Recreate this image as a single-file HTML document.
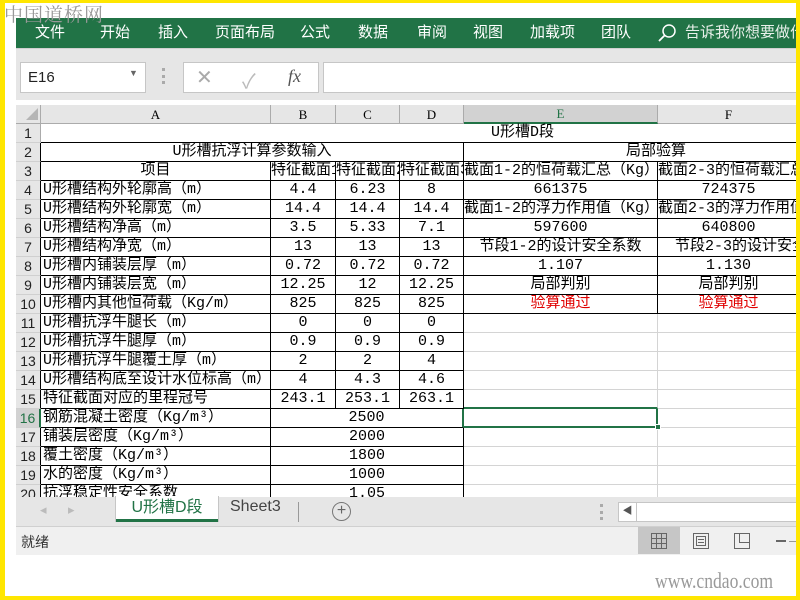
<!DOCTYPE html>
<html><head><meta charset="utf-8"><style>
*{box-sizing:border-box}
body{margin:0;width:800px;height:600px;background:#fff;position:relative;overflow:hidden;font-family:"Liberation Sans","Noto Sans CJK SC",sans-serif}
.abs{position:absolute}
#frame{position:absolute;left:0;top:0;width:800px;height:600px;border:solid #ffe600;border-width:3px 4px 4px 5px;pointer-events:none;z-index:20}
#ribbon{left:16px;top:18px;width:784px;height:30px;background:#217346;color:#fff;font-size:15px}
#ribbon span{position:absolute;top:3px;white-space:nowrap}
#fbar{left:16px;top:48px;width:784px;height:52px;background:#e6e6e6;border-top:1px solid #d0d0d0}
.box{position:absolute;background:#fff;border:1px solid #c6c6c6}
#grid{position:absolute;left:16px;top:105px;width:784px;border-collapse:separate;border-spacing:0;table-layout:fixed;font-family:"Liberation Mono","Noto Sans CJK SC",monospace;font-size:15px;color:#000}
#grid td{padding:0;height:19px;line-height:18px;white-space:nowrap;overflow:hidden;border-right:1px solid #d4d4d4;border-bottom:1px solid #d4d4d4;text-align:center}
#grid tr.h td{height:17px;background:#e6e6e6;border-right:1px solid #ababab;border-bottom:1px solid #ababab;font-family:"Liberation Serif",serif;font-size:13px;line-height:17px}
#grid td.r{background:#e6e6e6;border-right:1px solid #ababab;border-bottom:1px solid #d0d0d0;font-family:"Liberation Sans",sans-serif;font-size:14px;color:#222}
#grid td.r.k{border-right-color:#000}
#grid td.b{border-right-color:#000;border-bottom-color:#000}
#grid td.l{text-align:left;padding-left:2px}
.red{color:#e00000}
#tabs{left:16px;top:497px;width:784px;height:30px;background:#e6e6e6;border-bottom:1px solid #d0d0d0}
#status{left:16px;top:527px;width:784px;height:28px;background:#f0f0f0;font-size:14px;color:#333}
</style></head><body>
<div class="abs" style="left:4px;top:0;font-family:'Noto Serif CJK SC',serif;font-size:19px;color:#999;letter-spacing:1px;z-index:10">中国道桥网</div>
<div id="ribbon" class="abs">
<span style="left:19px">文件</span><span style="left:84px">开始</span><span style="left:142px">插入</span><span style="left:199px">页面布局</span><span style="left:284px">公式</span><span style="left:342px">数据</span><span style="left:401px">审阅</span><span style="left:457px">视图</span><span style="left:514px">加载项</span><span style="left:585px">团队</span>
<svg style="position:absolute;left:641px;top:5px" width="20" height="20"><circle cx="12" cy="8" r="6" fill="none" stroke="#fff" stroke-width="1.5"/><line x1="8" y1="12" x2="2" y2="18" stroke="#fff" stroke-width="1.8"/></svg>
<span style="left:669px;color:#e8f0ea">告诉我你想要做什</span>
</div>
<div id="fbar" class="abs"></div>
<div class="box" style="left:20px;top:62px;width:126px;height:31px;font-size:15px;padding:6px 0 0 7px;color:#222">E16<span style="position:absolute;left:108px;top:5px;font-size:9px;color:#666">▼</span></div>
<div class="abs" style="left:162px;top:68px;width:3px;height:16px;border-left:3px dotted #aaa"></div>
<div class="box" style="left:183px;top:62px;width:136px;height:31px">
<span style="position:absolute;left:12px;top:2px;font-size:20px;color:#aaa">✕</span>
<span style="position:absolute;left:58px;top:2px;font-size:20px;color:#bbb">✓</span>
<span style="position:absolute;left:104px;top:3px;font-size:18px;font-style:italic;font-family:'Liberation Serif',serif;color:#555">fx</span></div>
<div class="box" style="left:323px;top:62px;width:477px;height:31px"></div>
<table id="grid">
<colgroup><col style="width:25px"><col style="width:230px"><col style="width:65px"><col style="width:64px"><col style="width:64px"><col style="width:194px"><col style="width:142px"></colgroup>
<tr class="h"><td style="position:relative"><svg style="position:absolute;left:9px;top:2px" width="14" height="14"><polygon points="13,1 13,13 1,13" fill="#b5b5b5"/></svg></td><td>A</td><td>B</td><td>C</td><td>D</td><td style="background:#d2d2d2;color:#217346;border-bottom:2px solid #217346">E</td><td>F</td></tr>
<tr><td class="r">1</td><td colspan="6" style="border-right:0;border-bottom-color:#000;text-align:left;padding-left:450px;overflow:visible">U形槽D段</td></tr>
<tr><td class="r k">2</td><td colspan="4" class="b">U形槽抗浮计算参数输入</td><td colspan="2" class="b" style="text-align:left;padding-left:162px">局部验算</td></tr>
<tr><td class="r k">3</td><td class="b">项目</td><td class="b l" style="padding:0">特征截面1</td><td class="b l" style="padding:0">特征截面2</td><td class="b l" style="padding:0">特征截面3</td><td class="b l" style="padding:0">截面1-2的恒荷载汇总（Kg）</td><td class="b l" style="padding:0">截面2-3的恒荷载汇总</td></tr>
<tr><td class="r k">4</td><td class="b l">U形槽结构外轮廓高（m）</td><td class="b">4.4</td><td class="b">6.23</td><td class="b">8</td><td class="b">661375</td><td class="b">724375</td></tr>
<tr><td class="r k">5</td><td class="b l">U形槽结构外轮廓宽（m）</td><td class="b">14.4</td><td class="b">14.4</td><td class="b">14.4</td><td class="b l" style="padding:0">截面1-2的浮力作用值（Kg）</td><td class="b l" style="padding:0">截面2-3的浮力作用值</td></tr>
<tr><td class="r k">6</td><td class="b l">U形槽结构净高（m）</td><td class="b">3.5</td><td class="b">5.33</td><td class="b">7.1</td><td class="b">597600</td><td class="b">640800</td></tr>
<tr><td class="r k">7</td><td class="b l">U形槽结构净宽（m）</td><td class="b">13</td><td class="b">13</td><td class="b">13</td><td class="b">节段1-2的设计安全系数</td><td class="b l" style="padding-left:17px">节段2-3的设计安全系数</td></tr>
<tr><td class="r k">8</td><td class="b l">U形槽内铺装层厚（m）</td><td class="b">0.72</td><td class="b">0.72</td><td class="b">0.72</td><td class="b">1.107</td><td class="b">1.130</td></tr>
<tr><td class="r k">9</td><td class="b l">U形槽内铺装层宽（m）</td><td class="b">12.25</td><td class="b">12</td><td class="b">12.25</td><td class="b">局部判别</td><td class="b">局部判别</td></tr>
<tr><td class="r k">10</td><td class="b l">U形槽内其他恒荷载（Kg/m）</td><td class="b">825</td><td class="b">825</td><td class="b">825</td><td class="b red">验算通过</td><td class="b red">验算通过</td></tr>
<tr><td class="r k">11</td><td class="b l">U形槽抗浮牛腿长（m）</td><td class="b">0</td><td class="b">0</td><td class="b">0</td><td></td><td></td></tr>
<tr><td class="r k">12</td><td class="b l">U形槽抗浮牛腿厚（m）</td><td class="b">0.9</td><td class="b">0.9</td><td class="b">0.9</td><td></td><td></td></tr>
<tr><td class="r k">13</td><td class="b l">U形槽抗浮牛腿覆土厚（m）</td><td class="b">2</td><td class="b">2</td><td class="b">4</td><td></td><td></td></tr>
<tr><td class="r k">14</td><td class="b l">U形槽结构底至设计水位标高（m）</td><td class="b">4</td><td class="b">4.3</td><td class="b">4.6</td><td></td><td></td></tr>
<tr><td class="r k">15</td><td class="b l">特征截面对应的里程冠号</td><td class="b">243.1</td><td class="b">253.1</td><td class="b">263.1</td><td style="border-bottom:2px solid #217346"></td><td></td></tr>
<tr><td class="r k" style="background:#d2d2d2;color:#217346;border-right:2px solid #217346">16</td><td class="b l">钢筋混凝土密度（Kg/m³）</td><td colspan="3" class="b" style="border-right:2px solid #217346">2500</td><td style="border-right:2px solid #217346;border-bottom:2px solid #217346"></td><td></td></tr>
<tr><td class="r k">17</td><td class="b l">铺装层密度（Kg/m³）</td><td colspan="3" class="b">2000</td><td></td><td></td></tr>
<tr><td class="r k">18</td><td class="b l">覆土密度（Kg/m³）</td><td colspan="3" class="b">1800</td><td></td><td></td></tr>
<tr><td class="r k">19</td><td class="b l">水的密度（Kg/m³）</td><td colspan="3" class="b">1000</td><td></td><td></td></tr>
<tr><td class="r k">20</td><td class="b l">抗浮稳定性安全系数</td><td colspan="3" class="b">1.05</td><td></td><td></td></tr>
</table>
<div class="abs" style="left:655px;top:424px;width:6px;height:6px;background:#217346;border:1px solid #fff"></div>
<div id="tabs" class="abs">
<span style="position:absolute;left:24px;top:5px;color:#bbb;font-size:13px">◂</span><span style="position:absolute;left:52px;top:5px;color:#bbb;font-size:13px">▸</span>
<div style="position:absolute;left:100px;top:-1px;width:102px;height:26px;background:#fff;border-bottom:3px solid #217346;color:#217346;font-size:16px;text-align:center;line-height:23px;box-shadow:1px 0 0 #c6c6c6,-1px 0 0 #c6c6c6">U形槽D段</div>
<span style="position:absolute;left:214px;top:1px;font-size:16px;color:#444">Sheet3</span>
<div style="position:absolute;left:282px;top:5px;width:1px;height:20px;background:#999"></div>
<div style="position:absolute;left:316px;top:5px;width:19px;height:19px;border:1px solid #777;border-radius:50%;text-align:center;line-height:16px;color:#666;font-size:16px">+</div>
<div style="position:absolute;left:584px;top:7px;width:3px;height:16px;border-left:3px dotted #aaa"></div>
<div style="position:absolute;left:602px;top:5px;width:182px;height:20px;background:#fff;border:1px solid #c6c6c6"><div style="position:absolute;left:0;top:0;width:18px;height:18px;border-right:1px solid #c6c6c6;font-size:10px;color:#555;text-align:center;line-height:18px">◀</div></div>
</div>
<div id="status" class="abs"><span style="position:absolute;left:5px;top:5px">就绪</span>
<div style="position:absolute;left:622px;top:0;width:42px;height:27px;background:#c6c6c6"></div>
<svg style="position:absolute;left:634px;top:5px" width="18" height="18"><g fill="none" stroke="#666"><rect x="1.5" y="1.5" width="15" height="15"/><line x1="6.5" y1="1" x2="6.5" y2="17"/><line x1="11.5" y1="1" x2="11.5" y2="17"/><line x1="1" y1="6.5" x2="17" y2="6.5"/><line x1="1" y1="11.5" x2="17" y2="11.5"/></g></svg>
<svg style="position:absolute;left:676px;top:5px" width="18" height="18"><g fill="none" stroke="#666"><rect x="1.5" y="1.5" width="15" height="15"/><rect x="4.5" y="4.5" width="9" height="9"/><line x1="6" y1="7.5" x2="12" y2="7.5"/><line x1="6" y1="10.5" x2="12" y2="10.5"/></g></svg>
<svg style="position:absolute;left:717px;top:5px" width="18" height="18"><g fill="none" stroke="#666"><rect x="1.5" y="1.5" width="15" height="15"/><polyline points="6.5,1 6.5,10.5 16,10.5"/></g></svg>
<div style="position:absolute;left:760px;top:13px;width:10px;height:2px;background:#666"></div>
<div style="position:absolute;left:773px;top:14px;width:11px;height:1px;background:#999"></div>
</div>
<div class="abs" style="left:655px;top:568px;font-family:'Liberation Serif',serif;font-size:22px;color:#999;transform:scaleX(0.8);transform-origin:left">www.cndao.com</div>
<div id="frame"></div>
</body></html>
